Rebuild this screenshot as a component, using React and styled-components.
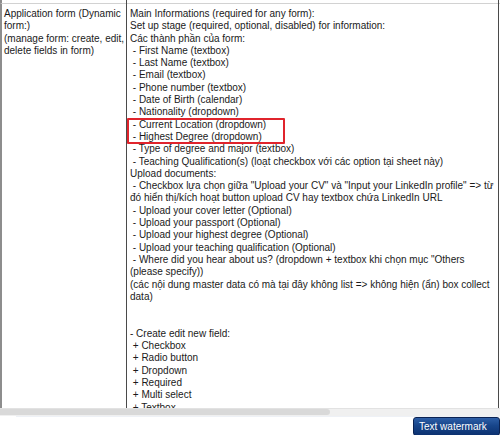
import React from 'react';
import styled, { createGlobalStyle } from 'styled-components';

const GlobalStyle = createGlobalStyle`
  html, body {
    margin: 0;
    padding: 0;
    background: #ffffff;
  }
  body {
    font-family: "Liberation Sans", Arial, "Noto Sans", sans-serif;
  }
`;

const Page = styled.div`
  width: 500px;
  height: 435px;
  display: flex;
  flex-direction: column;
  overflow: hidden;
  background: #fff;
`;

// sheet viewport (scrolled horizontally, the rest of the sheet is off screen)
const Viewport = styled.div`
  height: 408px;
  overflow: hidden;
  flex: none;
`;

const Sheet = styled.div`
  width: 760px;
  display: flex;
  flex-direction: column;
`;

const Row = styled.div`
  display: grid;
  grid-template-columns: 125px 372px 263px;
  height: ${(p) => p.height}px;
  border-left: 2px solid #8d8d8d;
  border-top: ${(p) => (p.top ? '1px solid #d2d2d2' : 'none')};
  box-sizing: border-box;
`;

const Cell = styled.div`
  border-right: 1px solid ${(p) => (p.light ? '#e0e0e0' : '#4a4a4a')};
  padding: 4px 0 0 ${(p) => p.pad || 2}px;
  overflow: hidden;
  position: relative;
`;

const Lines = styled.div`
  font-size: 10px;
  line-height: 12.3px;
  color: #1a1a1a;
  white-space: pre;
`;

const Highlight = styled.div`
  position: absolute;
  left: 0;
  top: 114px;
  width: 158px;
  height: 26px;
  border: 2px solid #e0242c;
  border-radius: 1px;
  box-sizing: border-box;
  pointer-events: none;
`;

const Footer = styled.div`
  flex: 1;
  display: flex;
  flex-direction: column;
`;

const ScrollTrack = styled.div`
  height: 8px;
  background: #f0f0f0;
  border-top: 1px solid #e2e2e2;
  box-sizing: border-box;
`;

const ScrollThumb = styled.div`
  width: ${(p) => p.size}%;
  height: 6px;
  background: #d9d9d9;
  border-radius: 0 4px 4px 0;
`;

const Actions = styled.div`
  flex: 1;
  display: flex;
  justify-content: flex-end;
  align-items: flex-start;
  border-top: 1px solid #eef1f6;
  margin-left: 16px;
`;

const WatermarkButton = styled.button`
  width: 87px;
  height: 19px;
  padding: 0 0 0 5px;
  text-align: left;
  white-space: nowrap;
  font-family: "Liberation Sans", Arial, sans-serif;
  font-size: 10px;
  color: #ffffff;
  background: linear-gradient(#2d5ea6 0%, #17458a 45%, #0c3170 100%);
  border: 1px solid #0a2252;
  border-radius: 3px;
  cursor: pointer;
`;

const leftText = [
  'Application form (Dynamic',
  'form:)',
  '(manage form: create, edit,',
  'delete fields in form)',
];

const rightText = [
  'Main Informations (required for any form):',
  'Set up stage (required, optional, disabled) for information:',
  'Các thành phần của form:',
  ' - First Name (textbox)',
  ' - Last Name (textbox)',
  ' - Email (textbox)',
  ' - Phone number (textbox)',
  ' - Date of Birth (calendar)',
  ' - Nationality (dropdown)',
  ' - Current Location (dropdown)',
  ' - Highest Degree (dropdown)',
  ' - Type of degree and major (textbox)',
  ' - Teaching Qualification(s) (loạt checkbox với các option tại sheet này)',
  'Upload documents:',
  ' - Checkbox lựa chọn giữa "Upload your CV" và "Input your LinkedIn profile" => từ',
  'đó hiển thị/kích hoạt button upload CV hay textbox chứa LinkedIn URL',
  ' - Upload your cover letter (Optional)',
  ' - Upload your passport (Optional)',
  ' - Upload your highest degree (Optional)',
  ' - Upload your teaching qualification (Optional)',
  ' - Where did you hear about us? (dropdown + textbox khi chọn mục "Others',
  '(please specify))',
  '(các nội dung master data có mà tại đây không list => không hiện (ẩn) box collect',
  'data)',
  '',
  '',
  '- Create edit new field:',
  ' + Checkbox',
  ' + Radio button',
  ' + Dropdown',
  ' + Required',
  ' + Multi select',
  ' + Textbox',
];

export default function App() {
  return (
    <>
      <GlobalStyle />
      <Page>
        <Viewport>
          <Sheet>
            {/* tail of the row above */}
            <Row height={3}>
              <Cell />
              <Cell />
              <Cell light />
            </Row>
            <Row height={405} top>
              <Cell pad={2}>
                <Lines>{leftText.join('\n')}</Lines>
              </Cell>
              <Cell pad={3}>
                <Lines>{rightText.join('\n')}</Lines>
                <Highlight />
              </Cell>
              <Cell light />
            </Row>
          </Sheet>
        </Viewport>
        <Footer>
          <ScrollTrack>
            <ScrollThumb size={66} />
          </ScrollTrack>
          <Actions>
            <WatermarkButton>Text watermark</WatermarkButton>
          </Actions>
        </Footer>
      </Page>
    </>
  );
}
